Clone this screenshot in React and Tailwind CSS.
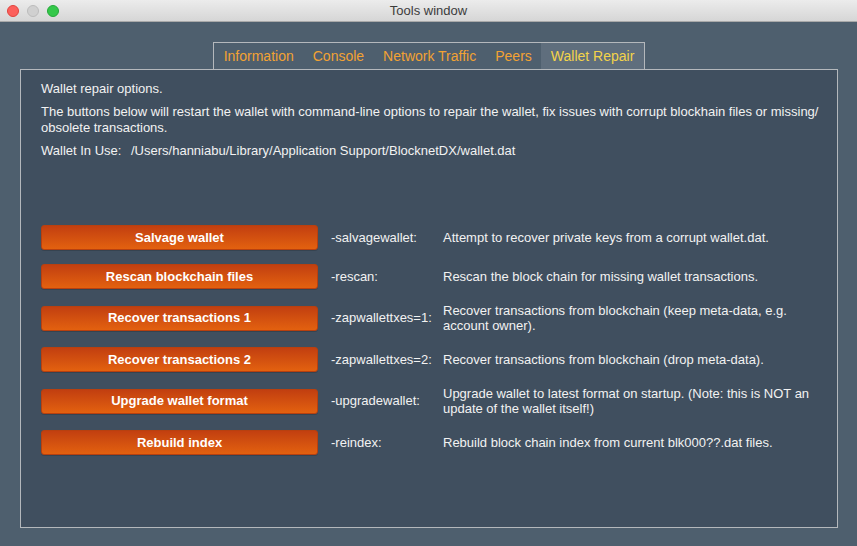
import React from "react";

const tabs = ["Information", "Console", "Network Traffic", "Peers", "Wallet Repair"];

const repairs = [
  { label: "Salvage wallet", opt: "-salvagewallet:", desc: "Attempt to recover private keys from a corrupt wallet.dat." },
  { label: "Rescan blockchain files", opt: "-rescan:", desc: "Rescan the block chain for missing wallet transactions." },
  { label: "Recover transactions 1", opt: "-zapwallettxes=1:", desc: "Recover transactions from blockchain (keep meta-data, e.g. account owner)." },
  { label: "Recover transactions 2", opt: "-zapwallettxes=2:", desc: "Recover transactions from blockchain (drop meta-data)." },
  { label: "Upgrade wallet format", opt: "-upgradewallet:", desc: "Upgrade wallet to latest format on startup. (Note: this is NOT an update of the wallet itself!)" },
  { label: "Rebuild index", opt: "-reindex:", desc: "Rebuild block chain index from current blk000??.dat files." },
];

const TitleBar = () => (
  <div className="relative h-[22px] shrink-0 flex items-center justify-center bg-gradient-to-b from-[#ececec] to-[#d6d6d6] border-b border-[#a9a9a9]">
    <div className="absolute left-[7px] top-[5px] flex gap-[8px]">
      <span className="w-[12px] h-[12px] rounded-full bg-[#fc605c] border border-[#e0443e]" />
      <span className="w-[12px] h-[12px] rounded-full bg-[#d0d0d0] border border-[#bcbcbc]" />
      <span className="w-[12px] h-[12px] rounded-full bg-[#34c84a] border border-[#25a83a]" />
    </div>
    <span className="text-[13px] text-[#3c3c3c]">Tools window</span>
  </div>
);

export default function App() {
  return (
    <div
      className="w-[857px] h-[546px] flex flex-col bg-[#4e5f6e] overflow-hidden"
      style={{ fontFamily: '"Liberation Sans", Arial, sans-serif' }}
    >
      <TitleBar />

      <div className="flex-1 flex flex-col pt-[20px] pl-[20px] pr-[19px] pb-[18px]">
        {/* TABS */}
        <div className="flex justify-center">
          <div className="flex h-[27px] border border-b-0 border-[#b4b8bc]">
            {tabs.map((t) => (
              <div
                key={t}
                className={`px-[9.5px] flex items-center text-[14px] ${
                  t === "Wallet Repair" ? "bg-[#5f6e7d] text-[#f3d34a]" : "text-[#f2a233]"
                }`}
              >
                {t}
              </div>
            ))}
          </div>
        </div>

        {/* PANEL */}
        <div className="flex-1 border border-[#b4b8bc] bg-[#404f5f] pl-[20px] pr-[14px] pt-[11px] text-[13px] text-[#f2f2f2]">
          <div className="leading-[16px]">Wallet repair options.</div>
          <div className="leading-[16px] mt-[7px]">
            The buttons below will restart the wallet with command-line options to repair the wallet, fix issues with corrupt blockhain files or missing/ obsolete transactions.
          </div>
          <div className="leading-[16px] mt-[7px] flex">
            <span className="w-[90px]">Wallet In Use:</span>
            <span>/Users/hanniabu/Library/Application Support/BlocknetDX/wallet.dat</span>
          </div>

          {/* REPAIR ROWS */}
          <div className="mt-[66px] flex flex-col gap-[14px]">
            {repairs.map((r) => (
              <div key={r.label} className="flex items-center">
                <button className="w-[277px] h-[25px] shrink-0 rounded-[3px] bg-gradient-to-b from-[#c23f10] to-[#e3610f] border border-[#b8400f] text-white font-bold text-[13px] shadow-[0_1px_0_rgba(0,0,0,0.15)]">
                  {r.label}
                </button>
                <span className="w-[112px] ml-[13px] shrink-0">{r.opt}</span>
                <span className="w-[378px] leading-[15px]">{r.desc}</span>
              </div>
            ))}
          </div>
        </div>
      </div>
    </div>
  );
}
